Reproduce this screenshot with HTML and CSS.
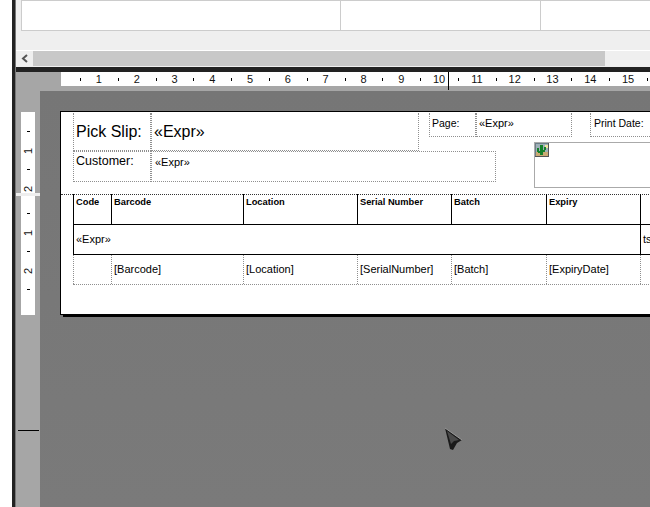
FILE: index.html
```html
<!DOCTYPE html>
<html lang="en">
<head>
    <meta charset="UTF-8">
    <title>Report Designer</title>
    <link rel="stylesheet" href="styles.css">
</head>
<body>
<div class="app">
    <div class="gutter"></div>
    <div class="frame">
        <div class="panel">
            <div class="data-grid">
                <div class="grid-cell grid-cell-a"></div>
                <div class="grid-cell grid-cell-b"></div>
                <div class="grid-cell grid-cell-c"></div>
            </div>
        </div>
        <div class="scrollbar">
            <div class="scroll-btn">
                <svg width="8" height="9" viewBox="0 0 8 9"><path d="M6 1 L2 4.5 L6 8" fill="none" stroke="#555" stroke-width="2"/></svg>
            </div>
            <div class="scroll-thumb"></div>
            <div class="scroll-track"></div>
        </div>
        <div class="divider"></div>
        <div class="ruler-row">
            <div class="ruler-corner"></div>
            <div class="h-ruler">
                <div class="h-cell"><span>1</span></div>
                <div class="h-cell"><span>2</span></div>
                <div class="h-cell"><span>3</span></div>
                <div class="h-cell"><span>4</span></div>
                <div class="h-cell"><span>5</span></div>
                <div class="h-cell"><span>6</span></div>
                <div class="h-cell"><span>7</span></div>
                <div class="h-cell"><span>8</span></div>
                <div class="h-cell"><span>9</span></div>
                <div class="h-cell"><span>10</span></div>
                <div class="h-cell"><span>11</span></div>
                <div class="h-cell"><span>12</span></div>
                <div class="h-cell"><span>13</span></div>
                <div class="h-cell"><span>14</span></div>
                <div class="h-cell"><span>15</span></div>
                <div class="h-cell"></div>
            </div>
            <div class="ruler-marker"></div>
        </div>
        <div class="workspace">
            <div class="side">
                <div class="v-ruler v-ruler-top">
                    <div class="v-tick"></div>
                    <div class="v-num">1</div>
                    <div class="v-tick"></div>
                    <div class="v-num">2</div>
                </div>
                <div class="v-band"></div>
                <div class="v-ruler v-ruler-bottom">
                    <div class="v-tick"></div>
                    <div class="v-num">1</div>
                    <div class="v-tick"></div>
                    <div class="v-num">2</div>
                    <div class="v-tick"></div>
                </div>
                <div class="side-marker"></div>
            </div>
            <div class="canvas">
                <div class="page">
                    <!-- header band, controls sit freely on the report surface -->
                    <div class="field f-title big">Pick Slip:</div>
                    <div class="field f-title-val big">«Expr»</div>
                    <div class="field f-cust mid">Customer:</div>
                    <div class="field f-cust-val small">«Expr»</div>
                    <div class="field f-page small">Page:</div>
                    <div class="field f-page-val small">«Expr»</div>
                    <div class="field f-date small">Print Date:</div>
                    <div class="field f-image">
                        <svg class="pic-icon" width="14" height="14" viewBox="0 0 14 14" shape-rendering="crispEdges">
                            <rect width="14" height="14" fill="#9fb0b8"/>
                            <rect y="9" width="14" height="5" fill="#c9aa74"/>
                            <rect x="10" y="2" width="3" height="3" fill="#f0e6a0"/>
                            <path d="M5 2h3v10H5z M2 5h2v3h1v2H3V9H2z M9 4h2v3h-1v2H8V7h1z" fill="#14802a"/>
                            <rect x="0" y="0" width="14" height="1" fill="#6d7f88"/>
                            <rect x="0" y="0" width="1" height="14" fill="#6d7f88"/>
                            <rect x="0" y="13" width="14" height="1" fill="#555"/>
                            <rect x="13" y="0" width="1" height="14" fill="#555"/>
                        </svg>
                    </div>
                    <div class="band-line"></div>

                    <div class="tbl">
                        <div class="tbl-row head">
                            <div class="c c1">Code</div>
                            <div class="c c2">Barcode</div>
                            <div class="c c3">Location</div>
                            <div class="c c4">Serial Number</div>
                            <div class="c c5">Batch</div>
                            <div class="c c6">Expiry</div>
                            <div class="c c7"></div>
                        </div>
                        <div class="tbl-row group">
                            <div class="c span">«Expr»</div>
                            <div class="c c7">ts</div>
                        </div>
                        <div class="tbl-row detail">
                            <div class="c c1"></div>
                            <div class="c c2">[Barcode]</div>
                            <div class="c c3">[Location]</div>
                            <div class="c c4">[SerialNumber]</div>
                            <div class="c c5">[Batch]</div>
                            <div class="c c6">[ExpiryDate]</div>
                            <div class="c c7"></div>
                        </div>
                    </div>
                </div>
                <svg class="cursor" width="20" height="24" viewBox="0 0 20 24">
                    <path d="M1 1 L18 13 L13 16 L9 23 L6 22 Z" fill="#1a1a1a"/>
                    <path d="M3 4 L15 13 L10 14 L7 17 Z" fill="#4a4a4a"/>
                    <path d="M1 1 L18 13" stroke="#9a9a9a" stroke-width="1" fill="none"/>
                </svg>
            </div>
        </div>
    </div>
</div>
</body>
</html>
```

FILE: styles.css
```css
html,body{margin: 0;padding: 0;height: 100%;overflow: hidden;background: #fff}
body{font-family: "Liberation Sans", Arial, sans-serif;color: #000}
.app{display: flex;width: 650px;height: 507px;overflow: hidden}
.gutter{width: 12px;flex: none}
.frame{
    width: 634px;
    flex: none;
    border-left: 3px solid #222;
    padding-left: 1px;
    background: #777;
    display: flex;
    flex-direction: column;
    min-width: 0;
}

/* top data grid */
.panel{height: 50px;flex: none;background: #efefef;overflow: hidden}
.data-grid{
    display: flex;
    height: 31px;
    margin-left: 5px;
    background: #fff;
    border: 1px solid #ccc;
    border-right: 0;
    box-sizing: border-box;
}
.grid-cell{border-right: 1px solid #ccc;box-sizing: border-box}
.grid-cell-a{width: 319px}
.grid-cell-b{width: 200px}
.grid-cell-c{flex: 1;border-right: 0}

.scrollbar{
    display: flex;
    height: 17px;
    flex: none;
    border-top: 1px solid #fff;
    border-bottom: 1px solid #efefef;
    box-sizing: border-box;
    background: #efefef;
}
.scroll-btn{width: 17px;display: flex;align-items: center;justify-content: center}
.scroll-thumb{width: 572px;background: #c8c8c8}
.scroll-track{flex: 1}
.divider{height: 5px;flex: none;background: #222}

/* rulers */
.ruler-row{display: flex;height: 19px;flex: none;background: #a6a6a6;position: relative}
.ruler-corner{width: 45px;flex: none}
.h-ruler{
    flex: 1;
    height: 14px;
    background: #fff;
    display: flex;
    padding-left: 19px;
    overflow: hidden;
}
.h-cell{
    width: 37.8px;
    flex: none;
    position: relative;
    text-align: center;
    font-size: 11px;
    line-height: 14px;
    color: #111;
}
.h-cell:before{
    content: "";
    position: absolute;
    left: 0;
    top: 6px;
    width: 1px;
    height: 3px;
    background: #000;
}
.ruler-marker{
    position: absolute;
    left: 432px;
    top: 0;
    width: 1px;
    height: 18px;
    background: #000;
}

.workspace{display: flex;flex: 1;min-height: 0}
.side{
    width: 24px;
    flex: none;
    background: #a6a6a6;
    padding-top: 21px;
    box-sizing: border-box;
    position: relative;
}
.v-ruler{
    width: 14px;
    margin-left: 5px;
    background: #fff;
    box-sizing: border-box;
    overflow: hidden;
}
.v-ruler-top{height: 81px;padding-top: 19px}
.v-ruler-bottom{height: 119px;padding-top: 17px}
.v-band{height: 3px;background: #eee}
.v-tick{width: 3px;height: 1px;margin: 0 0 0 6px;background: #000}
.v-num{
    writing-mode: vertical-rl;
    transform: rotate(180deg);
    font-size: 11px;
    line-height: 14px;
    height: 37px;
    display: flex;
    align-items: center;
    justify-content: center;
    color: #111;
}
.side-marker{
    position: absolute;
    left: 2px;
    top: 339px;
    width: 21px;
    height: 1px;
    background: #000;
}

.canvas{flex: 1;position: relative;overflow: hidden;background: linear-gradient(#767676,#7a7a7a);min-width: 0}
.page{
    position: absolute;
    left: 20px;
    top: 20px;
    width: 700px;
    height: 204px;
    background: #fff;
    border: 1px solid #000;
    box-sizing: border-box;
    box-shadow: 3px 2px 0 #000;
}
.field{
    position: absolute;
    box-sizing: border-box;
    border: 1px dotted #8f8f8f;
    border-top: 0;
    padding-left: 2px;
    white-space: nowrap;
}
.big{font-size: 16px;line-height: 38px}
.mid{font-size: 12.5px;line-height: 19px}
.small{font-size: 10.5px;line-height: 21px}

.f-title{left: 12px;top: 1px;width: 78px;height: 38px}
.f-title-val{left: 90px;top: 1px;width: 268px;height: 38px}
.f-cust{left: 12px;top: 39px;width: 78px;height: 31px;border-top: 1px dotted #8f8f8f}
.f-cust-val{left: 90px;top: 39px;width: 345px;height: 31px;border-top: 1px dotted #8f8f8f;font-size: 11px;line-height: 20px;padding-left: 3px}
.f-page{left: 368px;top: 1px;width: 47px;height: 24px}
.f-page-val{left: 415px;top: 1px;width: 96px;height: 24px;font-size: 11px}
.f-date{left: 529px;top: 1px;width: 120px;height: 24px;padding-left: 3px}
.f-image{left: 473px;top: 30px;width: 200px;height: 46px;border: 1px solid #aaa;padding: 0}
.pic-icon{display: block}

.band-line{
    position: absolute;
    left: 0;
    right: 0;
    top: 82px;
    border-top: 1px dotted #333;
}

/* table section */
.tbl{position: absolute;left: 12px;top: 82px;width: 680px}
.tbl-row{display: flex;height: 30px;box-sizing: border-box}
.c{box-sizing: border-box;flex: none;padding-left: 2px;white-space: nowrap;overflow: hidden}
.c1{width: 38px}
.c2{width: 132px}
.c3{width: 114px}
.c4{width: 94px}
.c5{width: 95px}
.c6{width: 94px}
.c7{flex: 1}
.span{width: 567px}

.head{height: 31px;border-bottom: 1px solid #000}
.head .c{
    border-left: 1px solid #000;
    font-size: 9.3px;
    font-weight: bold;
    line-height: 17px;
}
.group{border-bottom: 1px solid #000}
.group .c{border-left: 1px solid #000;font-size: 11px;line-height: 29px}
.detail{border-bottom: 1px dotted #8f8f8f}
.detail .c{border-left: 1px dotted #8f8f8f;font-size: 11px;line-height: 29px}

.cursor{position: absolute;left: 404px;top: 336px}
```
